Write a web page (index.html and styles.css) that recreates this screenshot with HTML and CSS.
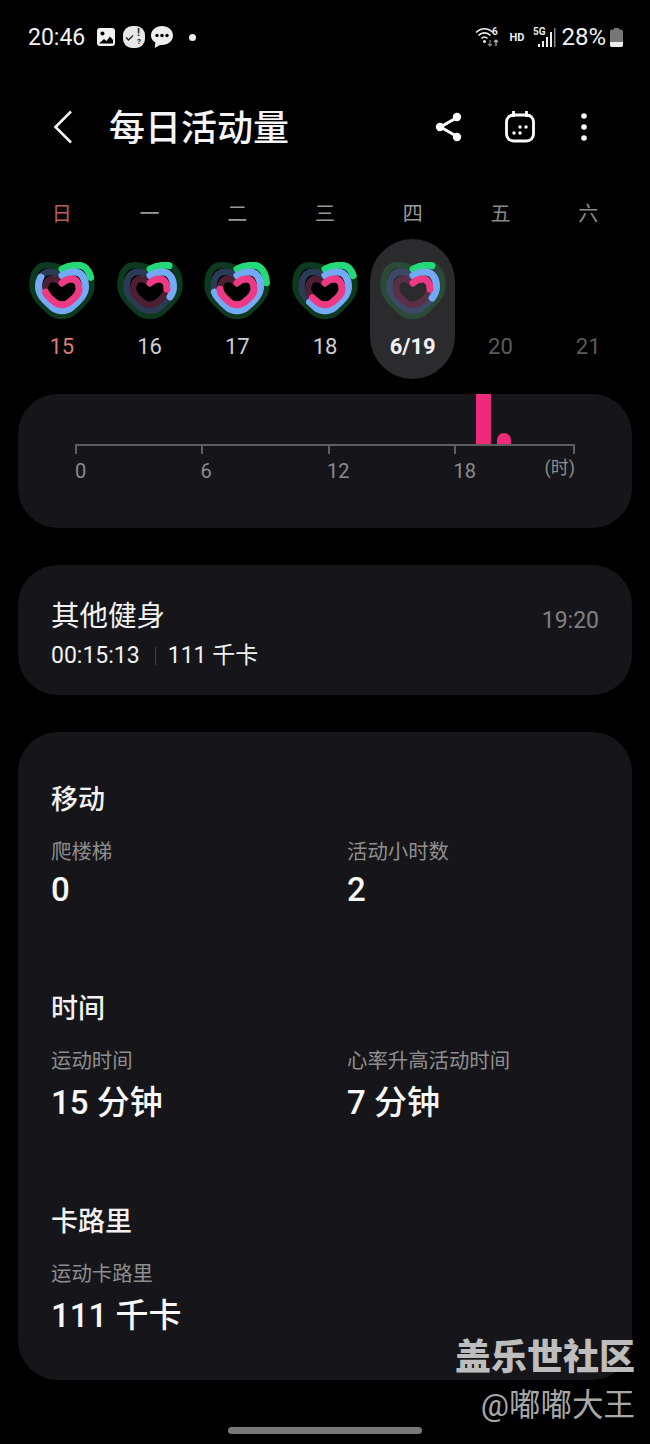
FILE: index.html

```html
<!DOCTYPE html>
<html lang="zh-CN">
<head>
    <meta charset="UTF-8">
    <meta name="viewport" content="width=device-width, initial-scale=1.0">
    <title>每日活动量</title>
    <link rel="stylesheet" href="styles.css">
</head>
<body>
    <!-- heart ring shapes, every path starts at the notch and runs clockwise -->
    <svg class="defs" width="0" height="0">
        <defs>
            <path id="ring-outer" pathLength="100" d="M33 7C38.900 4 43.300 3.250 49.200 3.250C58.100 3.250 62.500 12.500 62.500 22.700C62.500 34 54.200 41.200 45.400 49.400C38.900 55.500 27.100 55.500 20.600 49.400C11.800 41.200 3.500 34 3.500 22.700C3.500 12.500 7.900 3.250 16.800 3.250C22.700 3.250 27.100 4 33 7Z"/>
            <path id="ring-mid" pathLength="100" d="M33 13.500C37.700 10.700 41.200 10 45.900 10C53 10 56.500 17 56.500 24.800C56.500 33.400 49.900 38.900 42.900 45.100C37.700 49.800 28.300 49.800 23.100 45.100C16.100 38.900 9.500 33.400 9.500 24.800C9.500 17 13 10 20.100 10C24.800 10 28.300 10.700 33 13.500Z"/>
            <path id="ring-inner" pathLength="100" d="M33 21C36.400 17.800 38.900 17 42.300 17C47.500 17 50 21.700 50 26.900C50 32.600 45.300 36.200 40.100 40.400C36.400 43.500 29.600 43.500 25.900 40.400C20.700 36.200 16 32.600 16 26.900C16 21.700 18.500 17 23.700 17C27.100 17 29.600 17.800 33 21Z"/>
        </defs>
    </svg>

    <div class="status-bar">
        <div class="status-left">
            <span class="clock">20:46</span>
            <svg class="note-gallery" width="18" height="18" viewBox="0 0 18 18">
                <rect width="18" height="18" rx="3" fill="#f2f2f2"/>
                <circle cx="5.500" cy="5.500" r="2" fill="#000"/>
                <path d="M2 15.500l5-4.500 2.500 2 3.500-4.500 3 3.500v3.500z" fill="#000"/>
            </svg>
            <svg class="note-check" width="22" height="22" viewBox="0 0 22 22">
                <rect width="22" height="22" rx="9" fill="#e8e8e8"/>
                <path d="M3 11.500l2.500 2.500 4.500-4.500" fill="none" stroke="#222" stroke-width="1.300"/>
                <text x="14" y="10" class="check-mark">!</text>
                <text x="14" y="18" class="check-query">?</text>
            </svg>
            <svg class="note-chat" width="22" height="22" viewBox="0 0 22 22">
                <path d="M11 0C5 0 0 4 0 9.500c0 3 1.700 5.500 4.300 7.100L3.800 22l5.200-3.100c.7.100 1.300.1 2 .1 6 0 11-4 11-9.500S17 0 11 0z" fill="#eee"/>
                <circle cx="6" cy="9.500" r="1.700" fill="#000"/>
                <circle cx="11" cy="9.500" r="1.700" fill="#000"/>
                <circle cx="16" cy="9.500" r="1.700" fill="#000"/>
            </svg>
            <span class="status-dot"></span>
        </div>
        <div class="status-right">
            <svg width="27" height="22" viewBox="0 0 27 22">
                <path d="M1 6.500C6 1.500 13 1.500 18 6.500M3.500 9.500C7 6 12 6 15.500 9.500M6.500 12.500C8.500 10.500 10.500 10.500 12.500 12.500" fill="none" stroke="#eee" stroke-width="1.600"/>
                <circle cx="9.500" cy="15.500" r="1.500" fill="#eee"/>
                <path d="M15 14v6M13 18l2 2 2-2" fill="none" stroke="#888" stroke-width="1.200"/>
                <path d="M21 20v-6M19 16l2-2 2 2" fill="none" stroke="#bbb" stroke-width="1.200"/>
                <text x="17" y="9" class="wifi-six">6</text>
            </svg>
            <span class="hd">HD</span>
            <svg width="24" height="22" viewBox="0 0 24 22">
                <text x="0" y="8.500" class="five-g">5G</text>
                <rect x="5" y="18" width="2" height="3" fill="#eee"/>
                <rect x="9" y="15" width="2" height="6" fill="#eee"/>
                <rect x="13" y="11" width="2" height="10" fill="#eee"/>
                <rect x="17" y="6" width="2" height="15" fill="#eee"/>
                <rect x="21" y="2" width="1.500" height="19" fill="#888"/>
            </svg>
            <span class="battery-text">28%</span>
            <svg width="13" height="19" viewBox="0 0 13 19">
                <path d="M4 0h5v1.500h2a2 2 0 0 1 2 2V17a2 2 0 0 1-2 2H2a2 2 0 0 1-2-2V3.500a2 2 0 0 1 2-2h2z" fill="#777"/>
                <path d="M0 14h13v3a2 2 0 0 1-2 2H2a2 2 0 0 1-2-2z" fill="#eee"/>
            </svg>
        </div>
    </div>

    <div class="app-bar">
        <svg class="back" width="20" height="34" viewBox="0 0 20 34">
            <path d="M18 1.500L2.500 17 18 32.500" fill="none" stroke="#f4f4f4" stroke-width="2.600"/>
        </svg>
        <h1 class="title">每日活动量</h1>
        <div class="actions">
            <svg class="share" width="30" height="32" viewBox="0 0 30 32">
                <path d="M23 6.500L6.500 16 23 25.500" fill="none" stroke="#fff" stroke-width="3"/>
                <circle cx="23" cy="6" r="4.200" fill="#fff"/>
                <circle cx="6" cy="16" r="4.200" fill="#fff"/>
                <circle cx="23" cy="26" r="4.200" fill="#fff"/>
            </svg>
            <svg width="30" height="32" viewBox="0 0 30 32">
                <rect x="1.500" y="4" width="27" height="26" rx="7" fill="none" stroke="#fff" stroke-width="2.800"/>
                <path d="M8.500 0v6M21.500 0v6" stroke="#fff" stroke-width="2.800"/>
                <circle cx="15" cy="16" r="1.700" fill="#fff"/>
                <circle cx="21" cy="16" r="1.700" fill="#fff"/>
                <circle cx="9" cy="22" r="1.700" fill="#fff"/>
                <circle cx="15" cy="22" r="1.700" fill="#fff"/>
            </svg>
            <svg width="10" height="32" viewBox="0 0 10 32">
                <circle cx="5" cy="5" r="2.800" fill="#fff"/>
                <circle cx="5" cy="16" r="2.800" fill="#fff"/>
                <circle cx="5" cy="27" r="2.800" fill="#fff"/>
            </svg>
        </div>
    </div>

    <div class="week">
        <div class="day sunday">
            <span class="day-name">日</span>
            <svg class="heart" width="66" height="58" viewBox="0 0 66 58">
                <use href="#ring-outer" class="track-green"/>
                <use href="#ring-mid" class="track-blue"/>
                <use href="#ring-inner" class="track-pink"/>
                <use href="#ring-outer" class="arc-green" stroke-dasharray="20 100"/>
                <use href="#ring-mid" class="arc-blue" stroke-dasharray="83 100"/>
                <use href="#ring-inner" class="arc-pink" stroke-dasharray="72 100"/>
            </svg>
            <span class="day-num">15</span>
        </div>
        <div class="day">
            <span class="day-name">一</span>
            <svg class="heart" width="66" height="58" viewBox="0 0 66 58">
                <use href="#ring-outer" class="track-green"/>
                <use href="#ring-mid" class="track-blue"/>
                <use href="#ring-inner" class="track-pink"/>
                <use href="#ring-outer" class="arc-green" stroke-dasharray="11 100"/>
                <use href="#ring-mid" class="arc-blue" stroke-dasharray="32 100"/>
                <use href="#ring-inner" class="arc-pink" stroke-dasharray="25 100"/>
            </svg>
            <span class="day-num">16</span>
        </div>
        <div class="day">
            <span class="day-name">二</span>
            <svg class="heart" width="66" height="58" viewBox="0 0 66 58">
                <use href="#ring-outer" class="track-green"/>
                <use href="#ring-mid" class="track-blue"/>
                <use href="#ring-inner" class="track-pink"/>
                <use href="#ring-outer" class="arc-green" stroke-dasharray="23 100"/>
                <use href="#ring-mid" class="arc-blue" stroke-dasharray="72 100"/>
                <use href="#ring-inner" class="arc-pink" stroke-dasharray="75 100"/>
            </svg>
            <span class="day-num">17</span>
        </div>
        <div class="day">
            <span class="day-name">三</span>
            <svg class="heart" width="66" height="58" viewBox="0 0 66 58">
                <use href="#ring-outer" class="track-green"/>
                <use href="#ring-mid" class="track-blue"/>
                <use href="#ring-inner" class="track-pink"/>
                <use href="#ring-outer" class="arc-green" stroke-dasharray="19 100"/>
                <use href="#ring-mid" class="arc-blue" stroke-dasharray="63 100"/>
                <use href="#ring-inner" class="arc-pink" stroke-dasharray="65 100"/>
            </svg>
            <span class="day-num">18</span>
        </div>
        <div class="day today">
            <span class="day-name">四</span>
            <div class="today-pill">
                <svg class="heart" width="66" height="58" viewBox="0 0 66 58">
                    <use href="#ring-outer" class="track-green"/>
                    <use href="#ring-mid" class="track-blue"/>
                    <use href="#ring-inner" class="track-pink"/>
                    <use href="#ring-outer" class="arc-green" stroke-dasharray="11 100"/>
                    <use href="#ring-mid" class="arc-blue" stroke-dasharray="33 100"/>
                    <use href="#ring-inner" class="arc-pink" stroke-dasharray="25 100"/>
                </svg>
                <span class="day-num">6/19</span>
            </div>
        </div>
        <div class="day future">
            <span class="day-name">五</span>
            <span class="heart-blank"></span>
            <span class="day-num">20</span>
        </div>
        <div class="day future">
            <span class="day-name">六</span>
            <span class="heart-blank"></span>
            <span class="day-num">21</span>
        </div>
    </div>

    <div class="card chart-card">
        <div class="bars">
            <span class="bar bar-tall"></span>
            <span class="bar bar-short"></span>
        </div>
        <div class="axis">
            <span class="tick"></span>
            <span class="tick"></span>
            <span class="tick"></span>
            <span class="tick"></span>
            <span class="tick"></span>
        </div>
        <div class="axis-labels">
            <span>0</span>
            <span>6</span>
            <span>12</span>
            <span>18</span>
            <span class="unit">(时)</span>
        </div>
    </div>

    <div class="card workout-card">
        <div>
            <div class="workout-name">其他健身</div>
            <div class="workout-meta">
                <span>00:15:13</span>
                <span class="meta-line"></span>
                <span>111 千卡</span>
            </div>
        </div>
        <span class="workout-time">19:20</span>
    </div>

    <div class="card stats-card">
        <section class="stat-group stat-group-digits">
            <h3>移动</h3>
            <div class="stat-row">
                <div>
                    <div class="stat-label">爬楼梯</div>
                    <div class="stat-value">0</div>
                </div>
                <div>
                    <div class="stat-label">活动小时数</div>
                    <div class="stat-value">2</div>
                </div>
            </div>
        </section>
        <section class="stat-group">
            <h3>时间</h3>
            <div class="stat-row">
                <div>
                    <div class="stat-label">运动时间</div>
                    <div class="stat-value">15 分钟</div>
                </div>
                <div>
                    <div class="stat-label">心率升高活动时间</div>
                    <div class="stat-value">7 分钟</div>
                </div>
            </div>
        </section>
        <section class="stat-group">
            <h3>卡路里</h3>
            <div class="stat-row">
                <div>
                    <div class="stat-label">运动卡路里</div>
                    <div class="stat-value">111 千卡</div>
                </div>
            </div>
        </section>
    </div>

    <div class="home-bar"></div>

    <div class="watermark">
        <div class="wm-site">盖乐世社区</div>
        <div class="wm-user">@嘟嘟大王</div>
    </div>
</body>
</html>
```

FILE: styles.css

```css
* {
    box-sizing: border-box;
}
body {
    position: relative;
    width: 650px;
    height: 1444px;
    margin: 0;
    overflow: hidden;
    background: #000;
    color: #fff;
    font-family: Roboto, "Noto Sans CJK SC", sans-serif;
}
.defs {
    position: absolute;
}

/* status bar */
.status-bar {
    display: flex;
    justify-content: space-between;
    align-items: center;
    height: 74px;
    padding: 0 27px 0 28px;
}
.status-left, .status-right {
    display: flex;
    align-items: center;
}
.clock {
    font-size: 23px;
    color: #f2f2f2;
}
.note-gallery {
    margin-left: 12px;
}
.note-check {
    margin-left: 8px;
}
.note-chat {
    margin-left: 6px;
}
.check-mark {
    font-size: 11px;
    font-weight: 700;
    fill: #222;
}
.check-query {
    font-size: 8px;
    font-weight: 700;
    fill: #222;
}
.status-dot {
    width: 7px;
    height: 7px;
    margin-left: 16px;
    border-radius: 50%;
    background: #eee;
}
.status-right {
    gap: 4px;
}
.wifi-six, .five-g {
    font-size: 10px;
    font-weight: 700;
    fill: #eee;
}
.hd {
    margin: 0 5px 0 4px;
    font-size: 11px;
    font-weight: 700;
    color: #eee;
}
.battery-text {
    font-size: 24px;
    color: #f2f2f2;
}

/* app bar */
.app-bar {
    display: flex;
    align-items: center;
    height: 70px;
    margin-top: 18px;
    padding: 0 61px 0 53px;
}
.back {
    margin-right: 36px;
}
.title {
    margin: -4px 0 0;
    font-size: 36px;
    font-weight: 500;
    color: #f4f4f4;
}
.actions {
    display: flex;
    align-items: center;
    gap: 44px;
    margin-left: auto;
}
.share {
    margin-right: -2.500px;
}

/* week strip */
.week {
    display: grid;
    grid-template-columns: repeat(7, 1fr);
    height: 192px;
    margin: 40px 18px 0;
}
.day {
    display: flex;
    flex-direction: column;
    align-items: center;
}
.day-name {
    height: 28px;
    margin-top: -2px;
    margin-bottom: 32px;
    font-size: 20px;
    line-height: 28px;
    color: #9a9a9a;
}
.heart {
    display: block;
    margin-top: 2px;
}
.heart-blank {
    height: 60px;
}
.heart use {
    fill: none;
    stroke-width: 6.500;
    stroke-linecap: round;
}
.heart .arc-green, .heart .arc-blue, .heart .arc-pink {
    stroke-width: 7;
}
.track-green {
    stroke: #0d3a1f;
}
.track-blue {
    stroke: #2b3a55;
}
.track-pink {
    stroke: #4d1f33;
}
.arc-green {
    stroke: #24d978;
}
.arc-blue {
    stroke: #74aaf5;
}
.arc-pink {
    stroke: #ee3a85;
}
.day-num {
    margin-top: 13px;
    font-size: 22px;
    line-height: 28px;
    color: #cfcfcf;
}
.sunday .day-name {
    color: #b8605e;
}
.sunday .day-num {
    color: #dd7a75;
}
.future .day-name {
    color: #8a8a8a;
}
.future .day-num {
    color: #5c5c5c;
}
.today-pill {
    display: flex;
    flex-direction: column;
    align-items: center;
    width: 85px;
    height: 140px;
    margin-top: -21px;
    padding-top: 23px;
    border-radius: 43px;
    background: #2b2b2e;
}
.today .heart {
    margin-top: 0;
}
.today .track-green {
    stroke: #2c4a38;
}
.today .track-blue {
    stroke: #3c4a66;
}
.today .track-pink {
    stroke: #5a3048;
}
.today .day-num {
    font-weight: 700;
    color: #f2f2f2;
}

/* cards */
.card {
    margin: 0 18px;
    background: #16161a;
    border-radius: 40px;
}
.chart-card {
    position: relative;
    height: 134px;
    padding: 0 57px;
}
.bars {
    position: relative;
    height: 50px;
}
.bar {
    position: absolute;
    bottom: 0;
    background: #ee2a7b;
}
.bar-tall {
    left: 401px;
    width: 14.500px;
    height: 50px;
}
.bar-short {
    left: 422px;
    width: 14px;
    height: 11px;
    border-radius: 7px 7px 0 0;
}
.axis {
    display: grid;
    grid-template-columns: 126px 126.500px 126px 119.500px 2px;
    height: 10px;
    border-top: 2px solid #5e5e5e;
}
.axis .tick {
    width: 2px;
    height: 8px;
    background: #5e5e5e;
}
.axis-labels {
    display: grid;
    grid-template-columns: 125.500px 126.500px 126.500px 1fr auto;
    margin-top: 5px;
    font-size: 20px;
    line-height: 24px;
    color: #8c8c8c;
}
.unit {
    margin-top: -3px;
    font-size: 18px;
}
.workout-card {
    display: flex;
    justify-content: space-between;
    align-items: flex-start;
    height: 130px;
    margin-top: 37px;
    padding: 32px 33px 0;
}
.workout-name {
    font-size: 28.500px;
    line-height: 40px;
    color: #f2f2f2;
}
.workout-meta {
    display: flex;
    align-items: center;
    margin-top: 3px;
    font-size: 23px;
    line-height: 32px;
    color: #f2f2f2;
}
.meta-line {
    width: 1px;
    height: 18px;
    margin: 0 12px 0 15px;
    background: #444;
}
.workout-time {
    margin-top: 8px;
    font-size: 23px;
    line-height: 32px;
    color: #808080;
}
.stats-card {
    height: 648px;
    margin-top: 37px;
    padding: 48px 33px 0;
}
.stat-group {
    height: 213px;
}
.stat-group-digits {
    height: 209px;
}
.stat-group h3 {
    margin: 0 0 18px;
    font-size: 27px;
    font-weight: 500;
    line-height: 40px;
    color: #f2f2f2;
}
.stat-row {
    display: grid;
    grid-template-columns: 296px 1fr;
}
.stat-label {
    font-size: 20.400px;
    line-height: 28px;
    color: #8e8e8e;
}
.stat-value {
    margin-top: 6px;
    font-size: 33px;
    font-weight: 500;
    line-height: 44px;
    color: #f7f7f7;
}
.stat-group-digits .stat-value {
    margin-top: 2px;
}

/* bottom overlays */
.home-bar {
    position: absolute;
    left: 228px;
    top: 1427px;
    width: 194px;
    height: 7px;
    border-radius: 4px;
    background: #777;
}
.watermark {
    position: absolute;
    right: 15px;
    top: 1335px;
    text-align: right;
    color: #bdbdbd;
}
.wm-site {
    font-size: 36px;
    font-weight: 900;
    line-height: 46px;
}
.wm-user {
    font-size: 31.500px;
    line-height: 50px;
    color: #a8a8a8;
}
```
